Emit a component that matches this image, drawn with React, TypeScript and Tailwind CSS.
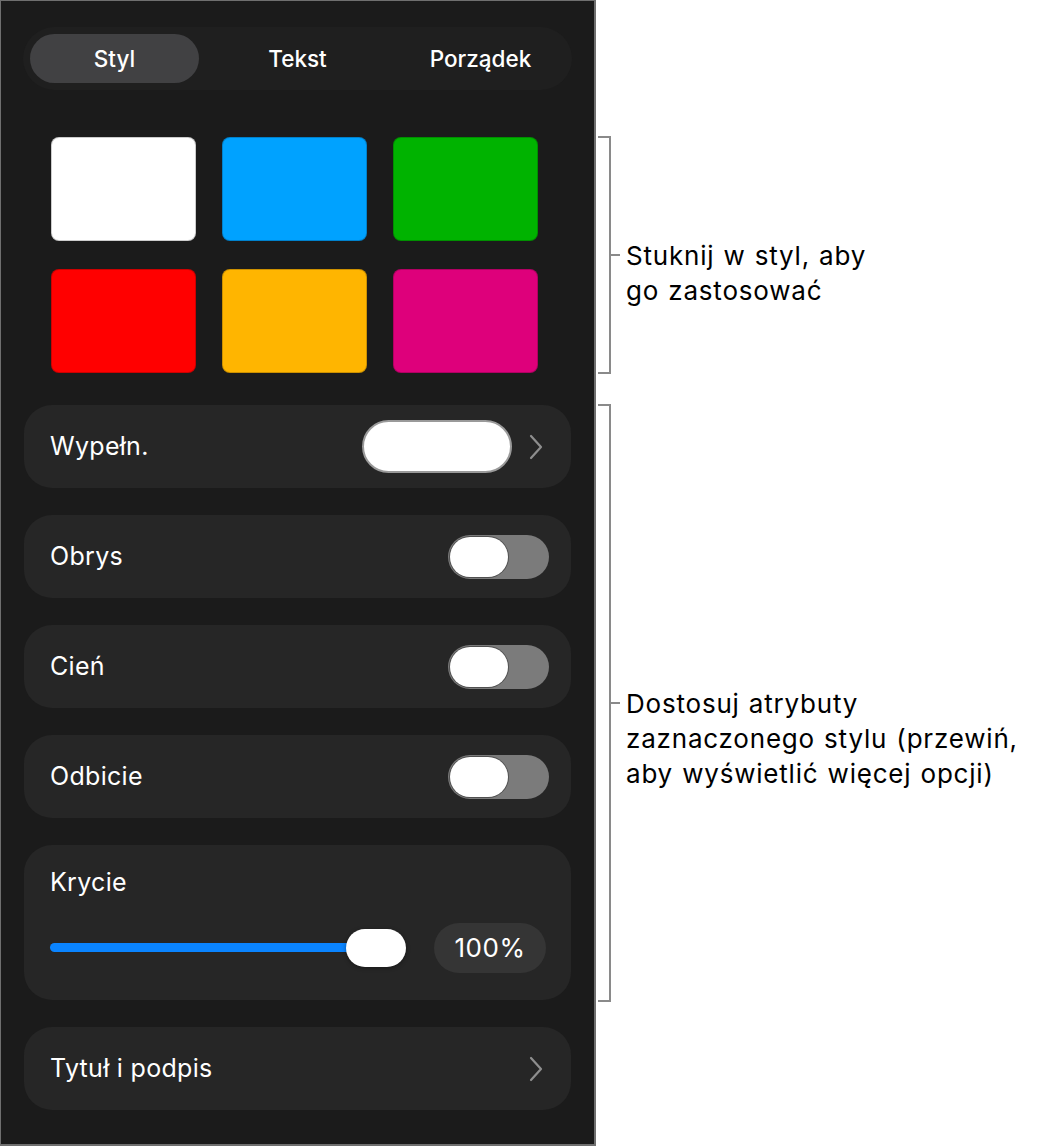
const swatches = ["#ffffff", "#00a2ff", "#00b300", "#ff0000", "#ffb500", "#de007b"];

function Chevron() {
  return (
    <svg width="14" height="26" viewBox="0 0 14 26" fill="none" className="shrink-0">
      <polyline points="2,2 12,13 2,24" stroke="#8e8e8e" strokeWidth="2.2" strokeLinecap="round" strokeLinejoin="round" />
    </svg>
  );
}

function Toggle() {
  return (
    <div className="flex h-[44px] w-[101px] items-center rounded-full bg-[#7b7b7b] p-[2px]">
      <div className="h-[40px] w-[58px] rounded-full bg-white shadow-[0_0_0_1px_rgba(0,0,0,0.35)]" />
    </div>
  );
}

function Row({ label, children }: { label: string; children?: React.ReactNode }) {
  return (
    <div className="flex h-[83px] items-center justify-between rounded-[28px] bg-[#262626] pl-[26px] pr-[22px]">
      <span className="text-[25px] tracking-[0.3px] text-white">{label}</span>
      {children}
    </div>
  );
}

function Callout({ height, lines }: { height: number; lines: string[] }) {
  return (
    <div className="flex items-center" style={{ height }}>
      <div className="ml-[2px] h-full w-[13px] border-y-2 border-r-2 border-[#8a8a8a]" />
      <div className="h-[2px] w-[9px] bg-[#8a8a8a]" />
      <div className="ml-[6px] h-[35px] overflow-visible">
        {lines.map((l) => (
          <div key={l} className="whitespace-nowrap text-[26px] leading-[35px] tracking-[0.8px] text-black [word-spacing:1px]">
            {l}
          </div>
        ))}
      </div>
    </div>
  );
}

export default function App() {
  return (
    <div className="flex h-[1146px] w-[1043px] bg-white font-['Inter',sans-serif]">
      <div className="flex h-full w-[596px] flex-col border-l border-t border-r-2 border-b-2 border-[#6f6f6f] bg-[#1b1b1b] px-[22px] pt-[26px]">
        {/* segmented tabs */}
        <div className="grid h-[63px] grid-cols-3 rounded-full bg-[#1f1f1f]">
          <div className="p-[7px]">
            <div className="flex h-full items-center justify-center rounded-full bg-[#414143] text-[22.5px] font-medium text-white">
              Styl
            </div>
          </div>
          <div className="flex items-center justify-center text-[22.5px] font-medium text-white">Tekst</div>
          <div className="flex items-center justify-center text-[22.5px] font-medium text-white">Porządek</div>
        </div>

        {/* style presets */}
        <div className="mt-[47px] grid grid-cols-[repeat(3,145px)] gap-x-[26px] gap-y-[28px] px-[28px]">
          {swatches.map((c) => (
            <div
              key={c}
              className="h-[104px] rounded-[8px] border border-black/20"
              style={{ backgroundColor: c }}
            />
          ))}
        </div>

        <div className="mt-[32px] flex flex-col gap-[27px] px-[1px]">
          <Row label="Wypełn.">
            <div className="flex items-center gap-[17px] pr-[6px]">
              <div className="h-[53px] w-[150px] rounded-full border-2 border-[#9a9a9a] bg-white" />
              <Chevron />
            </div>
          </Row>
          <Row label="Obrys">
            <Toggle />
          </Row>
          <Row label="Cień">
            <Toggle />
          </Row>
          <Row label="Odbicie">
            <Toggle />
          </Row>

          {/* opacity */}
          <div className="flex h-[155px] flex-col rounded-[28px] bg-[#262626] pl-[26px] pr-[25px] pt-[19px]">
            <span className="text-[25px] tracking-[0.3px] text-white">Krycie</span>
            <div className="mt-[21px] flex items-center justify-between">
              <div className="flex w-[356px] items-center">
                <div className="h-[9px] w-[304px] rounded-full bg-[#0a84ff]" />
                <div className="-ml-[8px] h-[38px] w-[60px] rounded-[19px] bg-white shadow-[0_1px_4px_rgba(0,0,0,0.4)]" />
              </div>
              <div className="flex h-[50px] w-[112px] items-center justify-center rounded-full bg-[#353535] text-[26px] tracking-[0.5px] text-white">
                100%
              </div>
            </div>
          </div>

          <Row label="Tytuł i podpis">
            <div className="pr-[6px]">
              <Chevron />
            </div>
          </Row>
        </div>
      </div>

      {/* annotations */}
      <div className="flex flex-col pt-[136px]">
        <Callout height={238} lines={["Stuknij w styl, aby", "go zastosować"]} />
        <div className="h-[30px]" />
        <Callout
          height={598}
          lines={["Dostosuj atrybuty", "zaznaczonego stylu (przewiń,", "aby wyświetlić więcej opcji)"]}
        />
      </div>
    </div>
  );
}
